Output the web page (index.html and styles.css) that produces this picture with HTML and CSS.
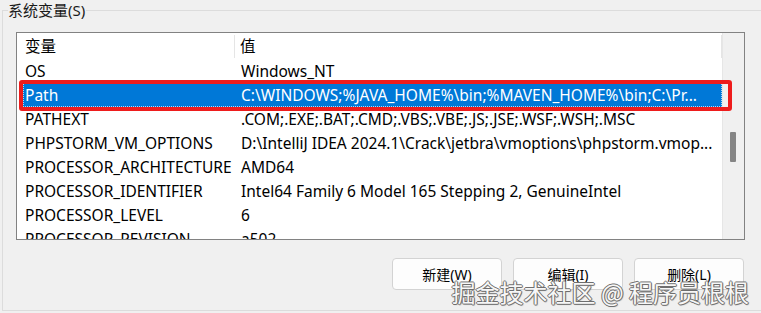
FILE: index.html
```html
<!DOCTYPE html>
<html lang="zh-CN">
<head>
    <meta charset="UTF-8">
    <title>环境变量 - 系统变量</title>
    <link rel="stylesheet" href="styles.css">
</head>
<body>
    <fieldset class="group">
        <legend>系统变量(S)</legend>

        <div class="listbox">
            <div class="list">
                <div class="list-head">
                    <div class="col-name">变量</div>
                    <div class="col-value">值</div>
                </div>
                <div class="row">
                    <div class="col-name">OS</div>
                    <div class="col-value">Windows_NT</div>
                </div>
                <div class="row selected">
                    <div class="col-name">Path</div>
                    <div class="col-value">C:\WINDOWS;%JAVA_HOME%\bin;%MAVEN_HOME%\bin;C:\Pr...</div>
                    <span class="mark"></span>
                </div>
                <div class="row">
                    <div class="col-name">PATHEXT</div>
                    <div class="col-value">.COM;.EXE;.BAT;.CMD;.VBS;.VBE;.JS;.JSE;.WSF;.WSH;.MSC</div>
                </div>
                <div class="row">
                    <div class="col-name">PHPSTORM_VM_OPTIONS</div>
                    <div class="col-value">D:\IntelliJ IDEA 2024.1\Crack\jetbra\vmoptions\phpstorm.vmop...</div>
                </div>
                <div class="row">
                    <div class="col-name">PROCESSOR_ARCHITECTURE</div>
                    <div class="col-value">AMD64</div>
                </div>
                <div class="row">
                    <div class="col-name">PROCESSOR_IDENTIFIER</div>
                    <div class="col-value">Intel64 Family 6 Model 165 Stepping 2, GenuineIntel</div>
                </div>
                <div class="row">
                    <div class="col-name">PROCESSOR_LEVEL</div>
                    <div class="col-value">6</div>
                </div>
                <div class="row">
                    <div class="col-name">PROCESSOR_REVISION</div>
                    <div class="col-value">a502</div>
                </div>
            </div>
            <div class="scrollbar">
                <div class="thumb"></div>
            </div>
        </div>

        <div class="buttons">
            <button class="btn">新建(W)</button>
            <button class="btn">编辑(I)</button>
            <button class="btn">删除(L)</button>
        </div>
    </fieldset>

    <div class="watermark">掘金技术社区 @ 程序员根根</div>
</body>
</html>
```

FILE: styles.css
```css
* {
    box-sizing: border-box;
}

html, body {
    margin: 0;
    padding: 0;
}

body {
    width: 761px;
    height: 313px;
    overflow: hidden;
    position: relative;
    background: #f0f0f0;
    color: #000;
    font-family: "Noto Sans", "Noto Sans CJK SC", sans-serif;
    font-size: 15.5px;
}

/* 分组框 */
.group {
    width: 790px;
    margin: 0 0 0 2px;
    padding: 12px 0 20px 13px;
    border: 1px solid #dcdcdc;
    border-right: none;
    min-width: 0;
}

.group legend {
    margin-left: -8px;
    padding: 0 1px 0 0;
    line-height: 20px;
    font-size: 15px;
    color: #1a1a1a;
}

/* 列表 */
.listbox {
    display: flex;
    width: 729px;
    height: 208px;
    border: 1px solid #828282;
    background: #fff;
    overflow: hidden;
}

.list {
    width: 705px;
    flex: none;
}

.list-head {
    display: flex;
    height: 26px;
    align-items: center;
}

.list-head .col-name {
    width: 218px;
    padding-left: 8px;
    border-right: 1px solid #e5e5e5;
    line-height: 23px;
}

.list-head .col-value {
    flex: 1;
    padding-left: 5px;
    border-right: 1px solid #e5e5e5;
    line-height: 23px;
}

.row {
    position: relative;
    display: flex;
    width: 699px;
    height: 24px;
    margin-left: 6px;
    line-height: 24px;
    white-space: nowrap;
}

.row .col-name {
    width: 212px;
    flex: none;
    padding-left: 2px;
    overflow: hidden;
}

.row .col-value {
    flex: 1;
    padding-left: 6px;
    overflow: hidden;
}

.row.selected {
    background: #0078d7;
    color: #fff;
    outline: 1px dotted rgba(255, 255, 255, 0.7);
    outline-offset: -1px;
}

.mark {
    position: absolute;
    top: -3px;
    left: -4px;
    right: -10px;
    bottom: -4px;
    border: 4px solid #ee1c1c;
    border-radius: 3px;
}

/* 滚动条 */
.scrollbar {
    flex: 1;
    background: #f0f0f0;
    border-left: 1px solid #e6e6e6;
}

.thumb {
    width: 6px;
    height: 30px;
    margin: 99px 0 0 7px;
    background: #858585;
    border-radius: 1px;
}

/* 按钮 */
.buttons {
    display: flex;
    justify-content: flex-end;
    gap: 11px;
    width: 728px;
    margin-top: 18px;
}

.btn {
    width: 110px;
    height: 32px;
    padding: 0;
    background: #fdfdfd;
    border: 1px solid #d3d3d3;
    border-radius: 4px;
    font-family: "Noto Sans", "Noto Sans CJK SC", sans-serif;
    font-size: 14px;
    color: #000;
}

/* 水印 */
.watermark {
    position: absolute;
    right: 12px;
    bottom: 5px;
    font-family: "Noto Sans CJK SC", sans-serif;
    font-size: 24px;
    line-height: 32px;
    color: #f7f7f7;
    text-shadow: 1px 0 0 #6e6e6e, -1px 0 0 #6e6e6e, 0 1px 0 #6e6e6e, 0 -1px 0 #6e6e6e, 1px 1px 1px rgba(0, 0, 0, 0.35);
    white-space: nowrap;
}
```
